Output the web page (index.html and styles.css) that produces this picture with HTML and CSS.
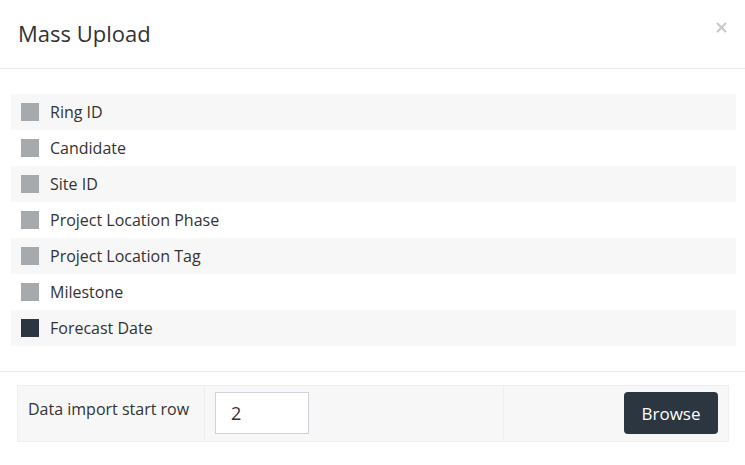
FILE: index.html
```html
<!DOCTYPE html>
<html>
<head>
<meta charset="utf-8">
<link rel="stylesheet" href="styles.css">
</head>
<body>
<div class="modal">
  <div class="modal-header">
    <h4 class="title">Mass Upload</h4>
    <button class="close" aria-label="Close">
      <svg width="11" height="11" viewBox="0 0 11 11"><path d="M1 1L10 10M10 1L1 10" stroke="#c9c9c9" stroke-width="2.2" stroke-linecap="butt"/></svg>
    </button>
  </div>
  <div class="modal-body">
    <div class="fields">
      <div class="field"><span class="box"></span><span>Ring ID</span></div>
      <div class="field"><span class="box"></span><span>Candidate</span></div>
      <div class="field"><span class="box"></span><span>Site ID</span></div>
      <div class="field"><span class="box"></span><span>Project Location Phase</span></div>
      <div class="field"><span class="box"></span><span>Project Location Tag</span></div>
      <div class="field"><span class="box"></span><span>Milestone</span></div>
      <div class="field"><span class="box dark"></span><span>Forecast Date</span></div>
    </div>
  </div>
  <div class="modal-footer">
    <div class="import">
      <div class="cell label-cell">Data import start row</div>
      <div class="cell input-cell"><input class="start-row" type="text" value="2"></div>
      <div class="cell button-cell"><button class="browse">Browse</button></div>
    </div>
  </div>
</div>
</body>
</html>
```

FILE: styles.css
```css
html, body {
  margin: 0;
  padding: 0;
  background: #ffffff;
}
body {
  font-family: "Open Sans", "Noto Sans", sans-serif;
  color: #333333;
  width: 745px;
  height: 465px;
  overflow: hidden;
}
.modal {
  width: 745px;
}
.modal-header {
  height: 68px;
  box-sizing: border-box;
  border-bottom: 1px solid #ebebeb;
  display: flex;
  align-items: flex-start;
  justify-content: space-between;
  padding: 0 18px 0 18px;
  height: 69px;
}
.title {
  margin: 0;
  padding-top: 17px;
  font-size: 22px;
  font-weight: 400;
  line-height: 32px;
  color: #333333;
}
.close {
  margin-top: 22px;
  margin-right: 0;
  padding: 0;
  border: 0;
  background: transparent;
  width: 11px;
  height: 11px;
  display: block;
  line-height: 0;
}
.modal-body {
  padding: 25px 9px 25px 11px;
  border-bottom: 1px solid #ebebeb;
}
.fields {
  display: flex;
  flex-direction: column;
}
.field {
  height: 36px;
  display: flex;
  align-items: center;
  font-size: 16px;
  color: #333333;
}
.field:nth-child(odd) {
  background: #f7f7f7;
}
.box {
  width: 18px;
  height: 18px;
  background: #a7aaad;
  margin-left: 10px;
  margin-right: 11px;
  flex: none;
}
.box.dark {
  background: #2b3640;
}
.modal-footer {
  padding: 13px 16px 0 17px;
}
.import {
  display: flex;
  height: 57px;
  box-sizing: border-box;
  border: 1px solid #efefef;
  background: #f7f7f7;
}
.cell {
  box-sizing: border-box;
}
.label-cell {
  width: 187px;
  padding: 12px 0 0 10px;
  font-size: 16px;
  line-height: 22px;
  color: #333333;
  border-right: 1px solid #efefef;
}
.input-cell {
  width: 299px;
  padding: 6px 0 0 10px;
  border-right: 1px solid #efefef;
}
.start-row {
  width: 94px;
  height: 42px;
  box-sizing: border-box;
  border: 1px solid #cfd4dc;
  background: #ffffff;
  padding: 0 0 0 15px;
  font-family: "Open Sans", "Noto Sans", sans-serif;
  font-size: 18px;
  color: #333333;
  outline: none;
  margin: 0;
}
.button-cell {
  flex: 1;
  display: flex;
  justify-content: flex-end;
  padding: 6px 10px 0 0;
}
.browse {
  width: 94px;
  height: 42px;
  background: #2b3640;
  color: #ffffff;
  border: 0;
  border-radius: 4px;
  font-family: "Open Sans", "Noto Sans", sans-serif;
  font-size: 17px;
  padding: 0;
  margin: 0;
}
```
